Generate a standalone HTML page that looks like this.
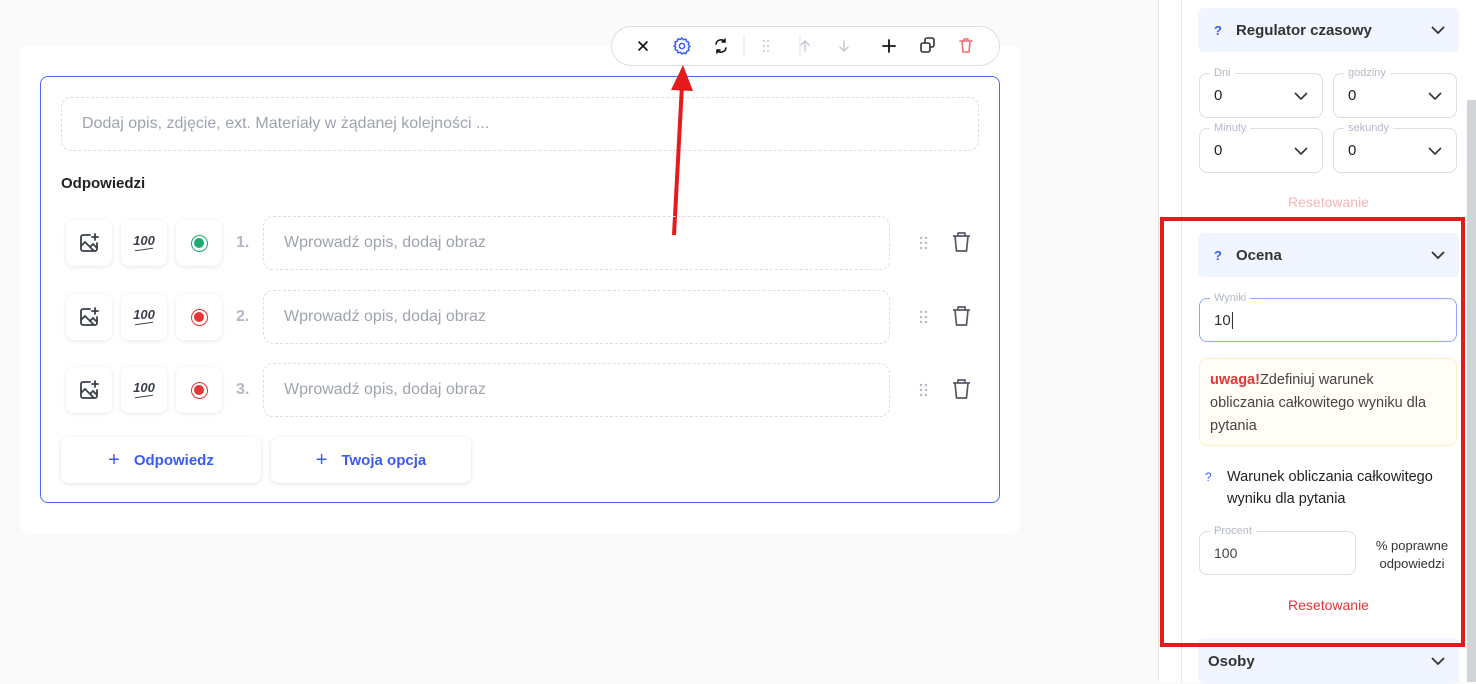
<!DOCTYPE html><html><head><style>
*{box-sizing:border-box;margin:0;padding:0}
body{width:1476px;height:682px;overflow:hidden;background:#fafafa;font-family:"Liberation Sans",sans-serif;position:relative;color:#222}
.a{position:absolute}
.card{left:20px;top:46px;width:1000px;height:487px;background:#fff;border-radius:8px}
.inner{left:40px;top:76px;width:960px;height:427px;border:1px solid #4a6cf7;border-radius:8px}
.dash{border:1px dashed #dcdde6;border-radius:10px;color:#9ea3ad;font-size:16px}
.ib{width:46px;height:46px;background:#fff;border-radius:8px;box-shadow:0 1px 4px rgba(0,0,0,.1);display:flex;align-items:center;justify-content:center}
.num{font-size:16px;color:#b2b8c6;font-weight:bold}
.btn{height:46px;width:200px;background:#fff;border-radius:8px;box-shadow:0 1px 4px rgba(0,0,0,.12);color:#3b5bf5;font-size:15px;display:flex;align-items:center;justify-content:center;font-weight:bold}
.tb{left:611px;top:26px;width:389px;height:40px;background:#fff;border:1px solid #dcdde6;border-radius:20px}
.hd{background:#f0f5ff;border-radius:6px;height:44px;display:flex;align-items:center;font-size:15px;font-weight:bold;color:#333}
.q{color:#3b5bf5;font-size:13px;margin:0 14px 0 16px}
.sel{border:1px solid #dcdde6;border-radius:8px;height:44px;font-size:15px;padding:0 14px;display:flex;align-items:center;justify-content:space-between}
.lab{position:absolute;top:-7px;left:10px;background:#fff;padding:0 4px;font-size:11px;color:#b2b8c6}
.rd{width:17px;height:17px;border-radius:50%;border:1.5px solid;display:flex;align-items:center;justify-content:center}
.rd i{display:block;width:10px;height:10px;border-radius:50%}
</style></head><body>
<div class="a" style="left:1158px;top:0;width:318px;height:682px;background:#fff;border-left:1px solid #e6e6ea"></div>
<div class="a" style="left:1181px;top:0;width:1px;height:682px;background:#e6e6ea"></div>
<div class="a" style="left:1467px;top:100px;width:9px;height:582px;background:#d2d4d8"></div>
<div class="a card"></div>
<div class="a inner"></div>
<div class="a dash" style="left:61px;top:97px;width:918px;height:54px;padding:17px 20px">Dodaj opis, zdjęcie, ext. Materiały w żądanej kolejności ...</div>
<div class="a" style="left:61px;top:175px;font-size:15px;font-weight:bold;color:#222">Odpowiedzi</div>

<div class="a tb"></div>
<svg class="a" style="left:611px;top:26px" width="389" height="40" viewBox="0 0 389 40" fill="none" stroke-linecap="round" stroke-linejoin="round">
<path d="M28 16l8 8M36 16l-8 8" stroke="#111" stroke-width="1.6"/>
<g stroke="#3b5bf5" stroke-width="1.5"><circle cx="71" cy="20" r="2.6"/><path d="M71 12l1.6 1.8 2.4-.6.6 2.4 2.4.8-.8 2.4 1.8 1.6-1.8 1.6.8 2.4-2.4.8-.6 2.4-2.4-.6L71 28l-1.6-1.8-2.4.6-.6-2.4-2.4-.8.8-2.4L63 20l1.8-1.6-.8-2.4 2.4-.8.6-2.4 2.4.6z"/></g>
<g stroke="#111" stroke-width="1.6"><path d="M105 18a5 5 0 0 1 9-2M115 22a5 5 0 0 1-9 2M114 13v3h-3M106 27v-3h3"/></g>
<path d="M133 10v20M189 10v20" stroke="#e6e6ea"/>
<g fill="#c4c7d0"><circle cx="153" cy="15" r="1"/><circle cx="157" cy="15" r="1"/><circle cx="153" cy="20" r="1"/><circle cx="157" cy="20" r="1"/><circle cx="153" cy="25" r="1"/><circle cx="157" cy="25" r="1"/></g>
<path d="M194 25v-10M190 19l4-4 4 4" stroke="#c4c7d0" stroke-width="1.4"/>
<path d="M233 15v10M229 21l4 4 4-4" stroke="#c4c7d0" stroke-width="1.4"/>
<path d="M278 14v12M272 20h12" stroke="#111" stroke-width="1.8"/>
<g stroke="#333" stroke-width="1.6"><rect x="310" y="17" width="9" height="9" rx="2"/><path d="M314 17v-3a2 2 0 0 1 2-2h5a2 2 0 0 1 2 2v5a2 2 0 0 1-2 2h-2"/></g>
<g stroke="#f07070" stroke-width="1.6"><path d="M349 15h12M353 15v-2h4v2M351 15l1 11h6l1-11"/></g>
</svg>

<svg class="a" style="left:660px;top:55px" width="40" height="185"><path d="M14 180L22 30" stroke="#e31b1b" stroke-width="4"/><path d="M23 10L11 35L33 36z" fill="#e31b1b"/></svg>

<div class="a hd" style="left:1198px;top:8px;width:261px"><span class="q">?</span>Regulator czasowy<svg style="position:absolute;right:14px" width="14" height="8"><path d="M1 1l6 6 6-6" stroke="#333" stroke-width="1.8" fill="none"/></svg></div>
<div class="a sel" style="left:1199px;top:73px;width:124px;height:45px"><span class="lab">Dni</span>0<svg width="14" height="8"><path d="M1 1l6 6 6-6" stroke="#333" stroke-width="1.6" fill="none"/></svg></div>
<div class="a sel" style="left:1333px;top:73px;width:124px;height:45px"><span class="lab">godziny</span>0<svg width="14" height="8"><path d="M1 1l6 6 6-6" stroke="#333" stroke-width="1.6" fill="none"/></svg></div>
<div class="a sel" style="left:1199px;top:128px;width:124px;height:45px"><span class="lab">Minuty</span>0<svg width="14" height="8"><path d="M1 1l6 6 6-6" stroke="#333" stroke-width="1.6" fill="none"/></svg></div>
<div class="a sel" style="left:1333px;top:128px;width:124px;height:45px"><span class="lab">sekundy</span>0<svg width="14" height="8"><path d="M1 1l6 6 6-6" stroke="#333" stroke-width="1.6" fill="none"/></svg></div>
<div class="a" style="left:1198px;top:194px;width:261px;text-align:center;color:#f7b5b5;font-size:14px">Resetowanie</div>

<div class="a hd" style="left:1198px;top:233px;width:261px"><span class="q">?</span>Ocena<svg style="position:absolute;right:14px" width="14" height="8"><path d="M1 1l6 6 6-6" stroke="#333" stroke-width="1.8" fill="none"/></svg></div>
<div class="a sel" style="left:1199px;top:298px;width:258px;border-color:#8ea4f5"><span class="lab">Wyniki</span><span style="color:#333">10<span style="border-left:1px solid #333;margin-left:1px"></span></span></div>
<div class="a" style="left:1199px;top:358px;width:258px;height:88px;background:#fffdf5;border:1px solid #fbefc8;border-radius:8px;padding:10px 22px 0 10px;font-size:14.5px;line-height:23px;color:#444"><b style="color:#e53535">uwaga!</b>Zdefiniuj warunek obliczania całkowitego wyniku dla pytania</div>
<div class="a" style="left:1205px;top:466px;font-size:14.5px;line-height:22px;color:#222;width:252px"><span style="color:#3b5bf5;font-size:12px;position:absolute;top:0">?</span><div style="margin-left:22px">Warunek obliczania całkowitego wyniku dla pytania</div></div>
<div class="a sel" style="left:1199px;top:531px;width:157px;color:#444;font-size:14px"><span class="lab">Procent</span>100</div>
<div class="a" style="left:1364px;top:537px;width:96px;text-align:center;font-size:13px;line-height:18px;color:#333">% poprawne odpowiedzi</div>
<div class="a" style="left:1198px;top:597px;width:261px;text-align:center;color:#e53535;font-size:14px">Resetowanie</div>
<div class="a hd" style="left:1198px;top:638px;width:261px;height:46px;padding-left:10px">Osoby<svg style="position:absolute;right:14px" width="14" height="8"><path d="M1 1l6 6 6-6" stroke="#333" stroke-width="1.8" fill="none"/></svg></div>
<div class="a" style="left:1160px;top:217px;width:305px;height:430px;border:4px solid #e31b1b"></div>

<div class="a ib" style="left:66px;top:220px"><svg width="22" height="22" fill="none" stroke="#3a3f4a" stroke-width="1.8" stroke-linecap="round"><path d="M12 3H5a2 2 0 0 0-2 2v12a2 2 0 0 0 2 2h12a2 2 0 0 0 2-2v-6M3 14l4-4 9 9M12 15l3-3 4 4M17 2v6M14 5h6"/></svg></div>
<div class="a ib" style="left:121px;top:220px;font-style:italic;font-weight:bold;color:#3a3f4a;font-size:13px;line-height:10px;flex-direction:column">100<div style="width:18px;border-top:1.5px solid #3a3f4a;margin-top:3px;transform:skewY(-8deg)"></div></div>
<div class="a ib" style="left:176px;top:220px"><div class="rd" style="border-color:#1fa971"><i style="background:#1fa971"></i></div></div>
<div class="a num" style="left:236px;top:234px">1.</div>
<div class="a dash" style="left:263px;top:216px;width:627px;height:54px;padding:17px 20px">Wprowadź opis, dodaj obraz</div>
<div class="a ib" style="left:66px;top:294px"><svg width="22" height="22" fill="none" stroke="#3a3f4a" stroke-width="1.8" stroke-linecap="round"><path d="M12 3H5a2 2 0 0 0-2 2v12a2 2 0 0 0 2 2h12a2 2 0 0 0 2-2v-6M3 14l4-4 9 9M12 15l3-3 4 4M17 2v6M14 5h6"/></svg></div>
<div class="a ib" style="left:121px;top:294px;font-style:italic;font-weight:bold;color:#3a3f4a;font-size:13px;line-height:10px;flex-direction:column">100<div style="width:18px;border-top:1.5px solid #3a3f4a;margin-top:3px;transform:skewY(-8deg)"></div></div>
<div class="a ib" style="left:176px;top:294px"><div class="rd" style="border-color:#e53535"><i style="background:#e53535"></i></div></div>
<div class="a num" style="left:236px;top:308px">2.</div>
<div class="a dash" style="left:263px;top:290px;width:627px;height:54px;padding:17px 20px">Wprowadź opis, dodaj obraz</div>
<div class="a ib" style="left:66px;top:367px"><svg width="22" height="22" fill="none" stroke="#3a3f4a" stroke-width="1.8" stroke-linecap="round"><path d="M12 3H5a2 2 0 0 0-2 2v12a2 2 0 0 0 2 2h12a2 2 0 0 0 2-2v-6M3 14l4-4 9 9M12 15l3-3 4 4M17 2v6M14 5h6"/></svg></div>
<div class="a ib" style="left:121px;top:367px;font-style:italic;font-weight:bold;color:#3a3f4a;font-size:13px;line-height:10px;flex-direction:column">100<div style="width:18px;border-top:1.5px solid #3a3f4a;margin-top:3px;transform:skewY(-8deg)"></div></div>
<div class="a ib" style="left:176px;top:367px"><div class="rd" style="border-color:#e53535"><i style="background:#e53535"></i></div></div>
<div class="a num" style="left:236px;top:381px">3.</div>
<div class="a dash" style="left:263px;top:363px;width:627px;height:54px;padding:17px 20px">Wprowadź opis, dodaj obraz</div>

<svg class="a" style="left:910px;top:225px" width="70" height="180" fill="none" stroke="#555b66" stroke-width="1.7" stroke-linejoin="round">
<g fill="#b2b8c6" stroke="none"><circle cx="11" cy="13" r="1.2"/><circle cx="16" cy="13" r="1.2"/><circle cx="11" cy="18" r="1.2"/><circle cx="16" cy="18" r="1.2"/><circle cx="11" cy="23" r="1.2"/><circle cx="16" cy="23" r="1.2"/>
<circle cx="11" cy="87" r="1.2"/><circle cx="16" cy="87" r="1.2"/><circle cx="11" cy="92" r="1.2"/><circle cx="16" cy="92" r="1.2"/><circle cx="11" cy="97" r="1.2"/><circle cx="16" cy="97" r="1.2"/>
<circle cx="11" cy="160" r="1.2"/><circle cx="16" cy="160" r="1.2"/><circle cx="11" cy="165" r="1.2"/><circle cx="16" cy="165" r="1.2"/><circle cx="11" cy="170" r="1.2"/><circle cx="16" cy="170" r="1.2"/></g>
<path d="M43 11h17M48 11V8h7v3M45 11l1.5 15h10l1.5-15"/>
<path d="M43 85h17M48 85v-3h7v3M45 85l1.5 15h10l1.5-15"/>
<path d="M43 158h17M48 158v-3h7v3M45 158l1.5 15h10l1.5-15"/>
</svg>
<div class="a btn" style="left:61px;top:437px"><span style="font-size:20px;font-weight:normal;margin-right:14px">+</span>Odpowiedz</div>
<div class="a btn" style="left:271px;top:437px"><span style="font-size:20px;font-weight:normal;margin-right:14px">+</span>Twoja opcja</div>
</body></html>
